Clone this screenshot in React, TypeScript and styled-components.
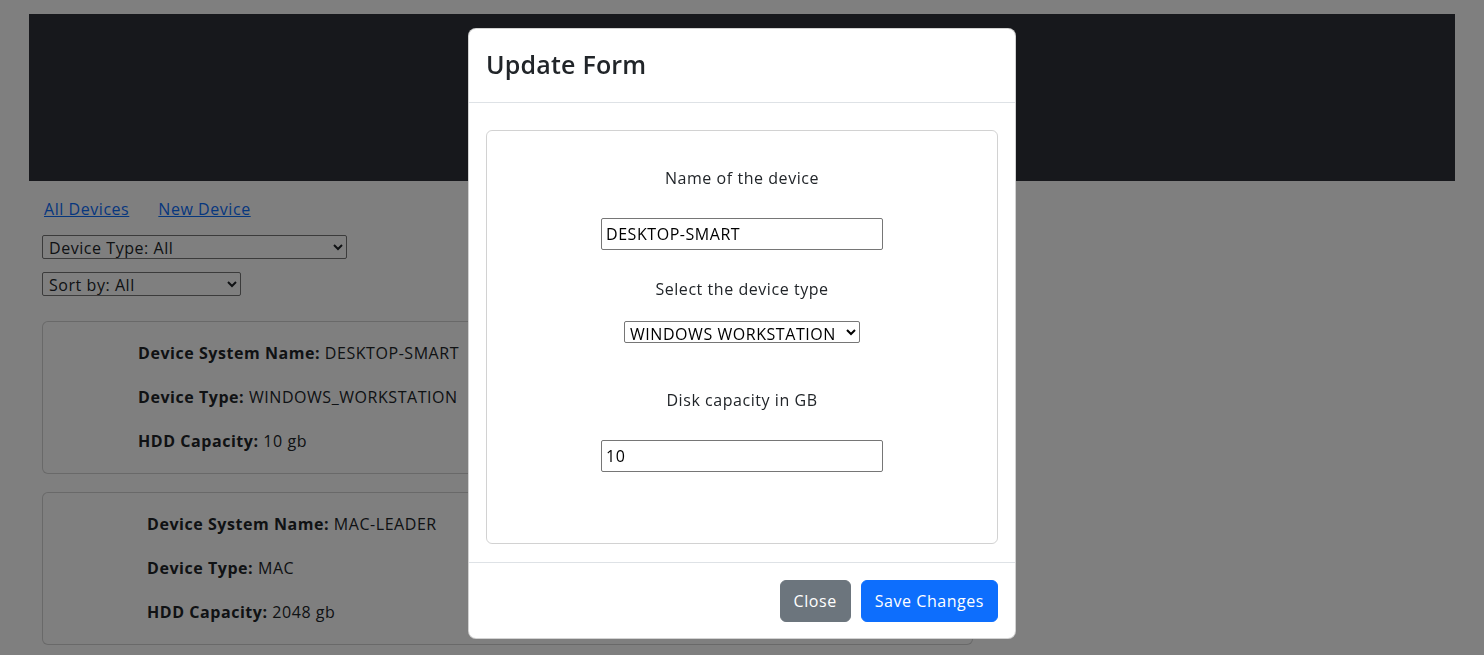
import React from "react";
import styled, { createGlobalStyle } from "styled-components";

const FONT = `"Open Sans", "Noto Sans", sans-serif`;

const GlobalStyle = createGlobalStyle`
  html, body { margin: 0; padding: 0; }
  body {
    font-family: ${FONT};
    font-size: 16px;
    line-height: 1.5;
    letter-spacing: 0.55px;
    color: #212529;
    background: #ffffff;
  }
  * { box-sizing: border-box; }
`;

const Page = styled.div`
  padding: 14px 29px 20px;
`;

const Banner = styled.header`
  height: 167px;
  background: #2e3038;
`;

const Nav = styled.nav`
  display: flex;
  gap: 29px;
  padding: 16px 0 0 15px;
`;

const NavLink = styled.a`
  color: #0d6efd;
  text-decoration: underline;
  font-size: 16px;
  line-height: 24px;
`;

const Filters = styled.div`
  display: flex;
  flex-direction: column;
  align-items: flex-start;
  gap: 13px;
  padding: 14px 0 0 13px;
`;

const FilterSelect = styled.select<{ $w: number }>`
  width: ${(p) => p.$w}px;
  height: 24px;
  font-family: ${FONT};
  font-size: 16px;
  letter-spacing: 0.55px;
  color: #212529;
  background: #fff;
  border: 1px solid #767676;
  border-radius: 2px;
  padding: 0 2px;
`;

const CardList = styled.div`
  display: flex;
  flex-direction: column;
  gap: 18px;
  margin: 25px 0 0 13px;
  width: 931px;
`;

const DeviceCard = styled.div<{ $indent: number }>`
  border: 1px solid rgba(0, 0, 0, 0.175);
  border-radius: 6px;
  padding: 19px 16px 20px ${(p) => p.$indent}px;
  display: flex;
  flex-direction: column;
  gap: 20px;
  background: #fff;
`;

const InfoLine = styled.p`
  margin: 0;
  line-height: 24px;
  strong { font-weight: 700; }
`;

const Backdrop = styled.div`
  position: fixed;
  inset: 0;
  background: rgba(0, 0, 0, 0.5);
`;

const ModalWrap = styled.div`
  position: fixed;
  inset: 0;
  display: flex;
  justify-content: center;
  align-items: flex-start;
  padding-top: 28px;
`;

const Modal = styled.div`
  width: 548px;
  background: #fff;
  border: 1px solid rgba(0, 0, 0, 0.175);
  border-radius: 8px;
  overflow: hidden;
`;

const ModalHeader = styled.div`
  padding: 18px 17px 17px;
  border-bottom: 1px solid #dee2e6;
`;

const ModalTitle = styled.h3`
  margin: 0 0 4px;
  font-size: 25px;
  font-weight: 600;
  letter-spacing: 0.2px;
  line-height: 34px;
  color: #212529;
`;

const ModalBody = styled.div`
  padding: 27px 17px 18px;
`;

const FormCard = styled.div`
  border: 1px solid rgba(0, 0, 0, 0.175);
  border-radius: 6px;
  padding: 35px 16px 71px;
  display: flex;
  flex-direction: column;
  align-items: center;
`;

const FieldLabel = styled.label<{ $gap: number }>`
  display: block;
  line-height: 24px;
  margin-bottom: ${(p) => p.$gap}px;
`;

const TextInput = styled.input<{ $after: number }>`
  width: 282px;
  height: 32px;
  font-family: ${FONT};
  font-size: 16px;
  letter-spacing: 0.55px;
  color: #000;
  padding: 0 4px;
  border: 1px solid #767676;
  border-radius: 2px;
  margin-bottom: ${(p) => p.$after}px;
`;

const TypeSelect = styled.select`
  width: 236px;
  height: 22px;
  font-family: ${FONT};
  font-size: 16px;
  letter-spacing: 0.55px;
  color: #000;
  background: #fff;
  border: 1px solid #767676;
  border-radius: 2px;
  padding: 0 1px;
  margin-bottom: 45px;
`;

const ModalFooter = styled.div`
  display: flex;
  justify-content: flex-end;
  gap: 10px;
  padding: 17px 17px 16px;
  border-top: 1px solid #dee2e6;
`;

const Button = styled.button<{ $variant: "secondary" | "primary" }>`
  height: 42px;
  padding: 0 13px;
  font-family: ${FONT};
  font-size: 16px;
  letter-spacing: 0.55px;
  line-height: 24px;
  color: #fff;
  border: 1px solid ${(p) => (p.$variant === "primary" ? "#0d6efd" : "#6c757d")};
  background: ${(p) => (p.$variant === "primary" ? "#0d6efd" : "#6c757d")};
  border-radius: 6px;
  cursor: pointer;
`;

const devices = [
  { name: "DESKTOP-SMART", type: "WINDOWS_WORKSTATION", hdd: "10", indent: 95 },
  { name: "MAC-LEADER", type: "MAC", hdd: "2048", indent: 104 },
];

export default function App() {
  return (
    <>
      <GlobalStyle />
      <Page>
        <Banner />
        <Nav>
          <NavLink href="#">All Devices</NavLink>
          <NavLink href="#">New Device</NavLink>
        </Nav>
        <Filters>
          <FilterSelect $w={305} defaultValue="all">
            <option value="all">Device Type: All</option>
          </FilterSelect>
          <FilterSelect $w={199} defaultValue="all">
            <option value="all">Sort by: All</option>
          </FilterSelect>
        </Filters>
        <CardList>
          {devices.map((d) => (
            <DeviceCard key={d.name} $indent={d.indent}>
              <InfoLine>
                <strong>Device System Name:</strong> {d.name}
              </InfoLine>
              <InfoLine>
                <strong>Device Type:</strong> {d.type}
              </InfoLine>
              <InfoLine>
                <strong>HDD Capacity:</strong> {d.hdd} gb
              </InfoLine>
            </DeviceCard>
          ))}
        </CardList>
      </Page>
      <Backdrop />
      <ModalWrap>
        <Modal>
          <ModalHeader>
            <ModalTitle>Update Form</ModalTitle>
          </ModalHeader>
          <ModalBody>
            <FormCard>
              <FieldLabel $gap={28}>Name of the device</FieldLabel>
              <TextInput $after={27} defaultValue="DESKTOP-SMART" />
              <FieldLabel $gap={20}>Select the device type</FieldLabel>
              <TypeSelect defaultValue="ws">
                <option value="ws">WINDOWS WORKSTATION</option>
                <option value="mac">MAC</option>
              </TypeSelect>
              <FieldLabel $gap={28}>Disk capacity in GB</FieldLabel>
              <TextInput $after={0} defaultValue="10" />
            </FormCard>
          </ModalBody>
          <ModalFooter>
            <Button $variant="secondary">Close</Button>
            <Button $variant="primary">Save Changes</Button>
          </ModalFooter>
        </Modal>
      </ModalWrap>
    </>
  );
}
